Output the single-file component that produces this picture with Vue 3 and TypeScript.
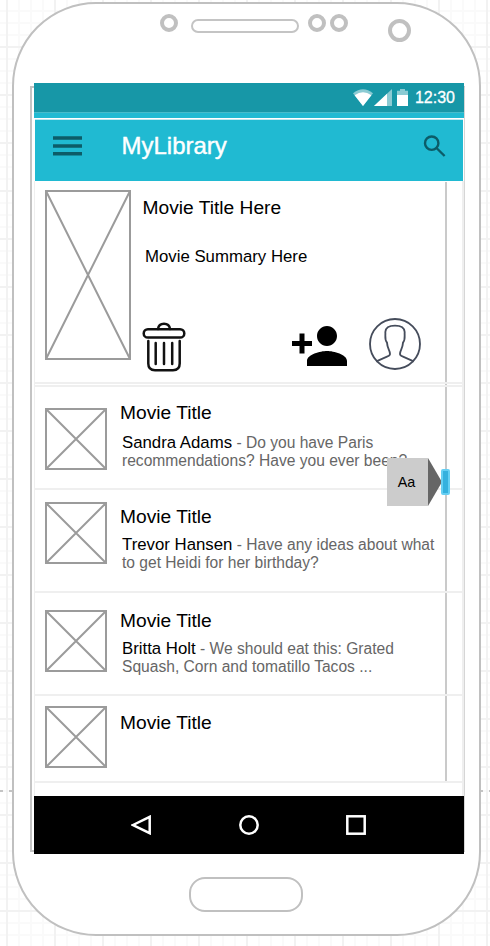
<script setup lang="ts">
interface Movie {
  id: string
  title: string
  name?: string
  text?: string
}

const movies: Movie[] = [
  { id: 'row-a', title: 'Movie Title', name: 'Sandra Adams', text: 'Do you have Paris recommendations? Have you ever been?' },
  { id: 'row-b', title: 'Movie Title', name: 'Trevor Hansen', text: 'Have any ideas about what to get Heidi for her birthday?' },
  { id: 'row-c', title: 'Movie Title', name: 'Britta Holt', text: 'We should eat this: Grated Squash, Corn and tomatillo Tacos ...' },
  { id: 'row-d', title: 'Movie Title' },
]
</script>

<template>
  <div class="canvas">
    <div class="page-break"></div>
    <main class="phone">
      <div class="hardware">
        <span class="sensor"></span>
        <span class="speaker"></span>
        <span class="sensor second"></span>
        <span class="sensor third"></span>
        <span class="camera"></span>
      </div>

      <div class="screen">
        <div class="status">
          <svg class="wifi" viewBox="0 0 20 17">
            <path d="M0 4.2Q10-3.6 20 4.2L10 17Z" fill="#8bcbd3" />
            <path d="M1.6 6.2Q10 .4 18.4 6.2L10 17Z" fill="#fff" />
          </svg>
          <svg class="signal" viewBox="0 0 18 17">
            <path d="M18 0V17H0Z" fill="#8bcbd3" />
            <path d="M13 4.7V17H0Z" fill="#fff" />
          </svg>
          <svg class="battery" viewBox="0 0 11 17">
            <path d="M0 1.7H3V0H8V1.7H11V6H0Z" fill="#8bcbd3" />
            <path d="M0 6H11V17H0Z" fill="#fff" />
          </svg>
          <span class="clock">12:30</span>
        </div>

        <header class="app-bar">
          <svg class="menu" viewBox="0 0 29 20">
            <path d="M0 2H29M0 10H29M0 17.8H29" />
          </svg>
          <h1>MyLibrary</h1>
          <svg class="search" viewBox="0 0 23 22">
            <circle cx="8.7" cy="8.2" r="6.7" />
            <path d="M13.5 13L21.6 21" />
          </svg>
        </header>

        <div class="content">
          <div class="track"></div>
          <section class="feature">
            <svg class="poster" viewBox="0 0 86 170">
              <path d="M1 1H85V169H1ZL85 169M85 1L1 169" />
            </svg>
            <div class="details">
              <h2>Movie Title Here</h2>
              <p>Movie Summary Here</p>
              <div class="actions">
                <svg class="trash" viewBox="0 0 44 50">
                  <rect x="1.7" y="7.2" width="40.6" height="8.4" rx="4.2" />
                  <path d="M16 7C16.5 3.5 19 1.8 22 1.8S27.5 3.5 28 7" />
                  <path d="M6.3 19V41.5Q6.3 48.2 13 48.2H31Q37.7 48.2 37.7 41.5V19" />
                  <path d="M13.7 21V42M22 21V42M30.2 21V42" />
                </svg>
                <svg class="add-person" viewBox="1 4 22 16">
                  <path d="M15 12c2.21 0 4-1.79 4-4s-1.79-4-4-4-4 1.79-4 4 1.79 4 4 4zm-9-2V7H4v3H1v2h3v3h2v-3h3v-2H6zm9 4c-2.67 0-8 1.34-8 4v2h16v-2c0-2.66-5.33-4-8-4z" />
                </svg>
                <svg class="avatar" viewBox="359 413 156 156">
                  <circle cx="437" cy="491" r="75" />
                  <path d="M381 543L413 529Q422 526 422 521C422 509 414 506 413 487C405 478 409 468 408 455C409 440 420 436 437 436S465 440 466 455C465 468 469 478 461 487C460 506 452 509 452 521Q452 526 461 529L493 543" />
                </svg>
              </div>
            </div>
          </section>

          <article v-for="movie in movies" :key="movie.id" class="row" :class="movie.id">
            <svg class="thumb" viewBox="0 0 62 62">
              <path d="M1 1H61V61H1ZL61 61M61 1L1 61" />
            </svg>
            <div class="copy">
              <h3>{{ movie.title }}</h3>
              <p v-if="movie.name"><strong>{{ movie.name }}</strong> - {{ movie.text }}</p>
            </div>
          </article>

          <div class="tooltip"><span>Aa</span></div>
          <div class="handle"></div>
        </div>

        <nav class="nav">
          <svg viewBox="0 0 20 20"><path d="M2 10L18.7 1.8V18.2Z" /></svg>
          <svg viewBox="0 0 20 20"><circle cx="10" cy="10" r="8.7" /></svg>
          <svg viewBox="0 0 20 20"><rect x="1.3" y="1.3" width="17.4" height="17.4" /></svg>
        </nav>
      </div>

      <div class="home"></div>
    </main>
  </div>
</template>

<style>
body {
  margin: 0;
  background: #fff;
}
</style>

<style scoped>
*, *::before, *::after {
  box-sizing: border-box;
}
h1, h2, h3, p {
  margin: 0;
  font-weight: 400;
}
svg {
  display: block;
  flex: none;
}
.canvas {
  position: relative;
  width: 490px;
  height: 946px;
  padding: 2px 0 0 12px;
  overflow: hidden;
  font-family: "Liberation Sans", Arial, sans-serif;
  color: #000;
  background-color: #fff;
  background-image:
    linear-gradient(90deg, #f2f2f2 2px, transparent 2px),
    linear-gradient(#f2f2f2 2px, transparent 2px),
    linear-gradient(90deg, #fafafa 2px, transparent 2px),
    linear-gradient(#fafafa 2px, transparent 2px);
  background-size: 48px 48px, 48px 48px, 12px 12px, 12px 12px;
  background-position: 6px 0, 0 46px, 6px 0, 0 46px;
}
.page-break {
  position: absolute;
  left: -3px;
  right: 0;
  top: 790px;
  height: 2px;
  background: repeating-linear-gradient(90deg, #c4c4c4 0 6px, transparent 6px 12px);
}
.phone {
  position: relative;
  display: flex;
  flex-direction: column;
  width: 469px;
  height: 934px;
  border: 2px solid #c0c0c0;
  border-radius: 84px;
  background: #fff;
}
.hardware {
  display: flex;
  align-items: flex-start;
  height: 79px;
  padding: 10px 0 0 146px;
}
.sensor {
  width: 18px;
  height: 18px;
  border: 4px solid #c0c0c0;
  border-radius: 50%;
}
.speaker {
  width: 108px;
  height: 14px;
  margin: 5px 0 0 13px;
  border: 2px solid #c4c4c4;
  border-radius: 7px;
}
.second {
  margin-left: 9px;
}
.third {
  margin-left: 4px;
}
.camera {
  width: 23px;
  height: 23px;
  margin: 5px 0 0 40px;
  border: 4px solid #c0c0c0;
  border-radius: 50%;
}
.screen {
  position: relative;
  display: flex;
  flex-direction: column;
  width: 430px;
  height: 771px;
  margin-left: 20px;
}
.screen::before {
  content: "";
  position: absolute;
  left: -4px;
  top: 3px;
  width: 435px;
  height: 766px;
  border: solid #c4c4c4;
  border-width: 2px 1px 2px 2px;
  border-right-color: #d6d6d6;
}
.status {
  position: relative;
  display: flex;
  align-items: flex-start;
  justify-content: flex-end;
  height: 35px;
  padding: 6px 9px 0 0;
  background: linear-gradient(#1797a7 29px, #46bccb 29px 30px, #20bad2 30px);
}
.wifi {
  width: 20px;
  height: 17px;
}
.signal {
  width: 18px;
  height: 17px;
  margin-left: 1px;
}
.battery {
  width: 11px;
  height: 17px;
  margin: 0 7px 0 5px;
}
.clock {
  font-size: 16px;
  line-height: 18px;
  color: #fff;
  -webkit-text-stroke: 0.3px #fff;
}
.app-bar {
  position: relative;
  display: flex;
  height: 61px;
  margin: 2px 1px 0;
  padding: 16px 17px 0 18px;
  background: #20bad2;
  box-shadow: 0 -1px #bfe9f0;
}
.menu {
  width: 29px;
  height: 20px;
  fill: none;
  stroke: #0c5c68;
  stroke-width: 3.4;
}
.app-bar h1 {
  margin: -3px auto 0 39.5px;
  font-size: 24px;
  line-height: 26px;
  color: #fff;
  -webkit-text-stroke: 0.4px #fff;
}
.search {
  width: 23px;
  height: 22px;
  margin-top: -1px;
  fill: none;
  stroke: #0c5c68;
  stroke-width: 2.4;
}
.content {
  position: relative;
  height: 615px;
  padding-top: 1px;
  border: solid #efefef;
  border-width: 0 2px 0 1px;
}
.track {
  position: absolute;
  left: 410px;
  top: 1px;
  width: 2px;
  height: 601px;
  background: #cacaca;
}
.feature {
  position: relative;
  display: flex;
  height: 202px;
  margin-bottom: 1px;
  padding: 8px 0 0 10px;
  border-bottom: 2px solid #efefef;
}
.poster, .thumb {
  fill: none;
  stroke: #9b9b9b;
  stroke-width: 2;
}
.poster {
  width: 86px;
  height: 170px;
}
.details {
  padding: 7px 0 0 11px;
}
.details h2, .copy h3 {
  margin-left: 1px;
  font-size: 19.2px;
  line-height: 22px;
}
.details h2 {
  margin-left: 0.5px;
}
.details p {
  margin: 28px 0 0 3px;
  font-size: 16.8px;
  line-height: 20px;
}
.actions {
  display: flex;
  align-items: flex-start;
  margin: 55px 0 0 -0.5px;
}
.trash {
  width: 44px;
  height: 50px;
  fill: none;
  stroke: #111;
  stroke-width: 2.5;
  stroke-linecap: round;
}
.add-person {
  width: 55px;
  height: 40px;
  margin: 4px 0 0 106.5px;
}
.avatar {
  width: 52px;
  height: 52px;
  margin: -4px 0 0 22px;
  fill: none;
  stroke: #454c5b;
  stroke-width: 5.5;
}
.row {
  position: relative;
  display: flex;
  height: 103px;
  padding-left: 10px;
  border-bottom: 2px solid #efefef;
}
.row-a {
  height: 105px;
  border-top: 2px solid #efefef;
}
.row-d {
  height: 87px;
}
.thumb {
  width: 62px;
  height: 62px;
  margin-top: 21px;
}
.row-b .thumb {
  margin-top: 12px;
}
.row-c .thumb {
  margin-top: 17px;
}
.row-d .thumb {
  margin-top: 10px;
}
.copy {
  width: 332px;
  padding: 15px 0 0 12px;
}
.row-b .copy, .row-d .copy {
  padding-top: 16px;
}
.row-c .copy {
  padding-top: 17px;
}
.copy p {
  width: 317px;
  margin: 8px 0 0 3px;
  font-size: 15.6px;
  line-height: 18px;
  color: #666;
}
.row-a .copy p {
  width: 300px;
  margin-top: 10px;
}
.copy strong {
  font-size: 16.8px;
  font-weight: 400;
  line-height: 18px;
  color: #000;
}
.tooltip {
  position: absolute;
  left: 352px;
  top: 277px;
  display: flex;
  width: 55px;
  height: 48px;
}
.tooltip span {
  width: 41px;
  padding-right: 2px;
  font-size: 14.4px;
  line-height: 48px;
  text-align: center;
  background: #ccc;
}
.tooltip::after {
  content: "";
  border: solid transparent;
  border-width: 24px 0 24px 14px;
  border-left-color: #666;
}
.handle {
  position: absolute;
  left: 406px;
  top: 288px;
  width: 9px;
  height: 26px;
  border: 2px solid #66cff3;
  border-radius: 2px;
  background: #35b1de;
}
.nav {
  position: relative;
  display: flex;
  align-items: center;
  gap: 87px;
  height: 58px;
  padding-left: 98px;
  background: #000;
}
.nav svg {
  width: 20px;
  height: 20px;
  fill: none;
  stroke: #fff;
  stroke-width: 2.5;
}
.nav svg:first-child {
  margin: 0 1px 0 -1px;
}
.home {
  width: 114px;
  height: 35px;
  margin: 23px 0 0 175px;
  border: 2px solid #c0c0c0;
  border-radius: 16px;
}
</style>
